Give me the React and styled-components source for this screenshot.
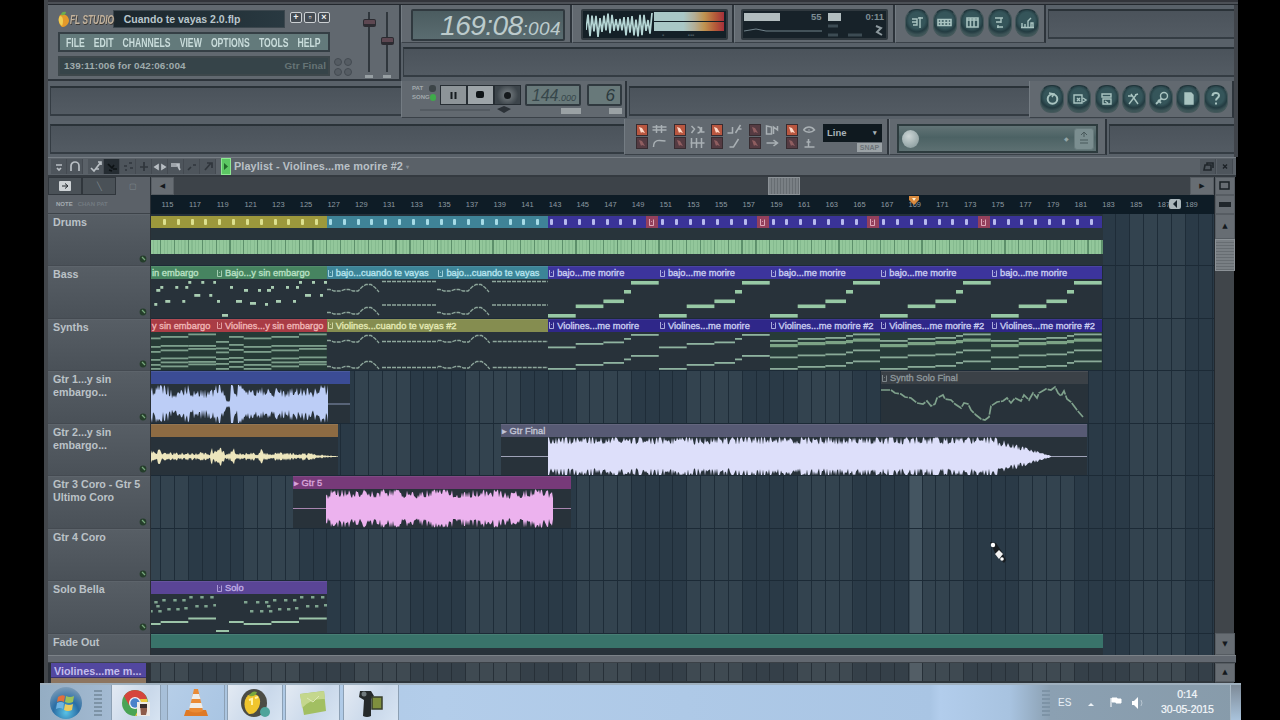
import React from "react";
import styled, { createGlobalStyle, css } from "styled-components";

const BAR = 13.84;
const PAT = BAR * 8;
const LANE = 52.45;

const Global = createGlobalStyle`
  * { box-sizing: border-box; }
  body { margin: 0; background: #000; overflow: hidden; font-family: "Liberation Sans", Arial, sans-serif; }
`;

const Screen = styled.div`
  width: 1280px; height: 720px; background: #000;
  display: flex; flex-direction: column; overflow: hidden; position: relative;
`;
const Studio = styled.div`
  margin-left: 44px; width: 1194px; height: 683px;
  display: flex; flex-direction: column;
  border-left: 4px solid #43474c;
`;

/* ---------- toolbars ---------- */
const TopStrip = styled.div`
  width: 1190px; height: 5px; flex: none;
  background: linear-gradient(#33353b 0 2px, #4c5056 2px 4px, #23282e 4px);
`;
const Toolbars = styled.div`
  height: 152px; flex: none; width: 1190px; background: #596169;
  border-right: 4px solid #40444a;
`;
const BarRow = styled.div`
  display: flex; height: ${p => p.$h}px;
`;
const Stack = styled.div`flex: 1; display: flex; flex-direction: column; min-width: 0;`;
const Slot = styled.div`
  flex: ${p => (p.$w ? "none" : 1)}; width: ${p => (p.$w ? p.$w + "px" : "auto")};
  height: 30px; margin: ${p => p.$m || "5px 0 3px 2px"};
  background: linear-gradient(#4b535b, #535b63);
  border-top: 2px solid #2a3238; border-bottom: 2px solid #343c43; border-left: 1px solid #343c43;
`;
const Panel = styled.div`
  width: ${p => p.$w}px; height: ${p => p.$h || 38}px; flex: none; background: #626970;
  border-right: 2px solid #2d343b; border-left: 1px solid #747c83; border-bottom: 1px solid #3a4148;
  padding: ${p => p.$p || "0"};
  display: flex; align-items: flex-start; gap: ${p => p.$gap || 0}px;
`;
const Main = styled.div`
  width: 353px; height: 76px; flex: none; background: #61686f;
  border-right: 2px solid #2d343b; border-bottom: 2px solid #2d343b;
  padding: 5px 0 0 10px; display: flex;
`;
const MainLeft = styled.div`width: 272px; display: flex; flex-direction: column;`;
const TitleRow = styled.div`display: flex; height: 18px; align-items: center; margin-bottom: 4px;`;
const Brand = styled.div`
  width: 55px; display: flex; align-items: center; white-space: nowrap;
  font: italic bold 13.5px "Liberation Sans", sans-serif; color: #c3b39d;
  text-shadow: 1px 1px 0 #3c3a38;
  svg { flex: none; }
  span { transform: scaleX(.62); transform-origin: left; width: 0; }
`;
const TitleBox = styled.div`
  width: 173px; height: 18px; background: linear-gradient(90deg, #1b262c, #293941);
  border: 1px solid #3c474e; color: #b9c6cc; padding-left: 10px;
  font: bold 10.5px/17px "Liberation Sans", sans-serif; white-space: nowrap;
`;
const WinButtons = styled.div`display: flex; gap: 2px; margin: -4px 0 0 5px;`;
const WinButton = styled.div`
  width: 12px; height: 11px; border: 1px solid #ccd0d3; background: #444b52; border-radius: 2px;
  color: #f1f3f4; font: bold 9px/8px "Liberation Sans", sans-serif; text-align: center;
`;
const Menu = styled.div`
  height: 20px; width: 272px; border: 2px solid #353f45; background: #637a7b; margin-bottom: 4px; overflow: hidden;
  div {
    display: flex; justify-content: space-between; width: 400px; padding: 0 8px 0 9px;
    transform: scaleX(.665); transform-origin: left;
    font: bold 13px/17px "Liberation Sans", sans-serif; color: #c9dcdb;
  }
`;
const Hint = styled.div`
  height: 20px; width: 272px; border: 2px solid #3d474b; background: #364449; padding: 0 2px 0 4px;
  display: flex; justify-content: space-between;
  font: bold 9.9px/16px "Liberation Sans", sans-serif; color: #9fabac; letter-spacing: .1px;
  span + span { color: #667476; }
`;
const Nubs = styled.div`
  display: grid; grid-template-columns: 8px 8px; gap: 2px; align-self: flex-end; margin: 0 0 3px 4px;
  i { height: 8px; border-radius: 4px; background: #555c63; border: 1px solid #444b52; }
`;
const Fader = styled.div`
  width: 18px; height: 68px; display: flex; flex-direction: column; align-items: center;
  background: linear-gradient(#30373d, #30373d) 50% 2px / 2px 60px no-repeat;
  padding-top: ${p => p.$at}px; margin-left: ${p => p.$ml || 0}px; justify-content: space-between;
  i { width: 13px; height: 8px; background: #5d4751; border: 1px solid #2c2b31; border-bottom-width: 3px; border-radius: 2px; }
  b { width: 8px; height: 3px; background: #979fa3; }
`;
const Lcd = styled.div`
  width: ${p => p.$w}px; height: ${p => p.$h || 30}px; margin-top: ${p => p.$mt || 0}px; flex: none;
  border: 2px solid ${p => p.$edge || "#30393f"}; border-radius: 2px;
  background: ${p => p.$bg || "linear-gradient(#4b5c60, #5a6c70)"};
  display: flex; overflow: hidden; color: ${p => p.$c || "#bccbcc"};
  align-items: baseline; justify-content: flex-end; white-space: nowrap;
  padding: ${p => p.$p || "0 4px"};
`;
const Digits = styled.span`
  font: italic ${p => p.$s}px/${p => p.$lh || 25}px "Liberation Sans", sans-serif;
  letter-spacing: ${p => p.$ls || 0}px;
`;
const Transport = styled.div`
  width: 27px; height: 20px; margin-top: 4px; flex: none; border: 1px solid #262d33;
  background: ${p => p.$bg}; display: flex; align-items: center; justify-content: center;
`;
const TransportCol = styled.div`display: flex; flex-direction: column; margin-left: ${p => p.$ml}px; svg { display: block; }`;
const TempoSlide = styled.svg`margin-left: -20px;`;
const Keys = styled.div`display: flex;`;
const ModeLeds = styled.div`
  width: 26px; padding: 4px 0 0 10px; display: flex; flex-direction: column; gap: 2px;
  div { display: flex; justify-content: space-between; font: bold 6px/7px "Liberation Sans", sans-serif; color: #a3aaae; width: 24px; }
  i { width: 7px; height: 7px; background: #3c4447; border-radius: 3px; }
  i.on { background: #3faa4a; }
`;
const SmallTag = styled.div`
  align-self: flex-end; height: 6px; width: ${p => p.$w}px; background: #9aa1a4; margin: 2px 0 0;
`;
const Round = styled.div`
  width: 24px; height: 28px; border-radius: 11px; flex: none;
  background: radial-gradient(circle at 50% 40%, #35555a 0 42%, #233b41 60%, #3d5457 75%);
  border: 1px solid #45585b; border-top-color: #20343a; 
  display: flex; justify-content: center; padding-top: 4px;
  svg { width: 17px; height: 17px; }
`;
const SnapGrid = styled.div`
  display: grid; grid-template-columns: repeat(5, 37.5px); grid-template-rows: 12px 12px; row-gap: 1px; width: 187px;
`;
const SnapCell = styled.div`
  display: flex; gap: 3px; align-items: center;
  i { width: 12px; height: 12px; border: 1px solid #372c31; background: ${p => (p.$on ? "#b8563f" : "#553b42")};
    display: flex; align-items: center; justify-content: center; color: ${p => (p.$on ? "#ffd9c8" : "#8f5e60")}; }
  i svg { width: 8px; height: 8px; }
  svg { width: 17px; height: 12px; }
`;
const SnapSelect = styled.div`
  width: 59px; height: 18px; background: #0f191f; color: #a8b3b8; padding: 0 5px 0 4px;
  display: flex; justify-content: space-between; font: bold 9.5px/18px "Liberation Sans", sans-serif;
  span + span { font-size: 7px; }
`;
const SnapTag = styled.div`
  width: 25px; height: 9px; margin: 1px 0 0 34px; background: #9ba2a6; color: #6c7378;
  font: bold 7px/9px "Liberation Sans", sans-serif; text-align: center;
`;
const Browser = styled.div`
  width: 201px; height: 29px; border: 2px solid #2d3b3e; background: linear-gradient(#627476, #4c6264 45%, #5d7072);
  display: flex; align-items: center; padding: 0 2px 0 3px;
  b { width: 17px; height: 18px; border-radius: 50%; background: radial-gradient(circle at 40% 35%, #ccd5d5, #7e9294); }
  span { flex: 1; text-align: right; padding-right: 5px; color: #93a5a6; font-size: 6px; }
  i { width: 20px; height: 22px; border-radius: 3px; background: #7b8e90; border: 1px solid #677a7c; display: flex; align-items: center; justify-content: center;}
`;

/* ---------- playlist ---------- */
const PlaylistBar = styled.div`
  height: 20px; width: 1188px; flex: none; background: #5a6168; border-top: 1px solid #777e85;
  border-bottom: 2px solid #343a40; display: flex; align-items: center; padding: 0 3px 0 3px;
`;
const Tool = styled.div`
  width: 16px; height: 15px; display: flex; align-items: center; justify-content: center; margin-left: ${p => p.$ml || 0}px;
  background: ${p => (p.$on ? "#252c32" : "#4e555c")}; border-right: 1px solid #444a51;
  svg { width: 14px; height: 13px; }
`;
const Green = styled.div`
  width: 10px; height: 17px; margin: 0 3px 0 5px; background: #5cc763; border: 1px solid #8ee893; display: flex; align-items: center;
`;
const PlTitle = styled.div`
  flex: 1; color: #b9c0c6; font: bold 10.9px/16px "Liberation Sans", sans-serif; white-space: nowrap; letter-spacing: .08px;
  margin-top: -1px;
  small { font-size: 6px; vertical-align: 1px; color: #878f95; }
`;
const Body = styled.div`display: flex; width: 1188px; height: 478px; flex: none;`;
const Left = styled.div`
  width: 103px; flex: none; background: #555c63; display: flex; flex-direction: column; border-right: 1px solid #292f35;
`;
const Tabs = styled.div`display: flex; height: 18px;`;
const Tab = styled.div`
  flex: 1; background: ${p => (p.$on ? "#5b6168" : "#4a5157")}; border: 1px solid ${p => (p.$on ? "#5b6168" : "#30363c")};
  display: flex; align-items: center; justify-content: center; color: #7e878d;
  font: 8px "Liberation Sans", sans-serif;
`;
const NoteTabs = styled.div`
  height: 19px; background: #5b6168; padding: 5px 0 0 8px; color: #a5adb2; border-bottom: 1px solid #3d4349;
  font: bold 6px/9px "Liberation Sans", sans-serif; display: flex; gap: 5px; span + span { color: #727a80; }
`;
const TrackHeads = styled.div`height: 441px; overflow: hidden;`;
const TrackHead = styled.div`
  height: ${LANE}px; flex: none; background: linear-gradient(#575e65, #4a5158);
  border-bottom: 1px solid #444a51; border-top: 1px solid #5d646b; padding: 1px 4px 0 5px;
  display: flex; justify-content: space-between;
  color: #bbc2c7; font: bold 10.7px/13px "Liberation Sans", sans-serif; white-space: pre;
  svg { align-self: flex-end; margin: 0 -1px 2px -6px; flex: none; }
`;
const Center = styled.div`width: 1063px; flex: none; display: flex; flex-direction: column;`;
const HScroll = styled.div`
  height: 18px; flex: none; background: #3d4349; display: flex;
`;
const Btn = styled.div`
  width: ${p => p.$w}px; height: ${p => p.$h}px; flex: none; background: #676d73; border: 1px solid #565c62;
  margin-left: ${p => p.$ml || 0}; margin-top: ${p => p.$mt || 0};
  display: flex; align-items: center; justify-content: center; color: #14191d; font: 7px/7px "DejaVu Sans", sans-serif;
`;
const Grip = styled.div`
  width: ${p => p.$w}px; height: ${p => p.$h}px; border: 1px solid #8b9196; flex: none; margin-left: ${p => p.$ml || 0}px;
  background: repeating-linear-gradient(${p => (p.$v ? "180deg" : "90deg")}, #797f84 0 2px, #676d72 2px 3px);
`;
const Ruler = styled.div`
  height: 19px; flex: none; background: #0e1c26; display: flex; padding: 5px 0 0 10.4px; overflow: hidden;
  color: #8d9aa1; font: 7.5px/10px "Liberation Sans", sans-serif; position: relative;
  div { width: ${BAR * 2}px; flex: none; }
`;
const Mark = styled.svg`position: absolute; left: 757px; top: 0;`;
const LoopEnd = styled.span`
  position: absolute; left: 1018px; top: 4px; width: 12px; height: 10px; background: #aab6bb; border-radius: 2px;
  display: flex; justify-content: center;
`;
const gridLines = css`
  background:
    repeating-linear-gradient(90deg, transparent 0 9.4px, #1e2c38 9.4px 10.4px, transparent 10.4px ${BAR}px),
    linear-gradient(90deg, #33434f 0 37.8px, #2a3a47 37.8px 93.1px, #33434f 93.1px) 0 0 / ${PAT}px 100%;
`;
const Lanes = styled.div`
  height: 441px; flex: none; overflow: hidden; position: relative; ${gridLines}
`;
const Playhead = styled.div`
  position: absolute; left: 759px; width: 12px; top: 0; bottom: 0; background: rgba(120, 140, 150, .26);
`;
const Lane = styled.div`
  height: ${LANE}px; display: flex; position: relative; border-bottom: 1px solid #1c2a36;
`;
const Clip = styled.div`
  width: ${p => p.$w}px; margin-left: ${p => p.$gap || 0}px; flex: none; overflow: hidden;
  background: ${p => p.$body || "#28323a"}; display: flex; flex-direction: column;
  svg.body { display: block; flex: none; }
`;
const ClipHead = styled.div`
  height: ${p => p.$h || 13}px; flex: none; background: ${p => p.$c}; color: ${p => p.$t || "#c9cdf0"};
  font: 9.3px/12px "Liberation Sans", sans-serif; -webkit-text-stroke: .35px; white-space: nowrap; overflow: hidden;
  padding-left: 1px; display: flex; gap: 2px; align-items: center; border-top: 1px solid rgba(255,255,255,.08);
`;
const DrumHeads = styled.div`display: flex;`;
const DrumHead = styled.div`
  width: ${p => p.$w}px; overflow: hidden;
  height: 14px; display: flex; background: ${p => p.$c}; border-top: 2px solid #24303a; flex: none;
`;
const Beat = styled.div`
  width: ${BAR}px; flex: none; display: flex; align-items: center;
  margin-left: ${p => p.$ml || 0}px;
  &::before { content: ""; width: 3px; height: 6px; background: ${p => p.$c}; margin-left: 2px; border-radius: 1px; }
`;
const RedBeat = styled.div`width: ${BAR}px; flex: none; display: flex; justify-content: center;`;
const RedBit = styled.span`
  width: 12px; height: 12px; background: #94405c; display: flex; align-items: center; justify-content: center;
`;
const DrumBand = styled.div`
  height: 14px; margin-top: 12px; flex: none;
  background:
    repeating-linear-gradient(90deg, transparent 0 9.2px, rgba(65,115,82,.6) 9.2px 10.4px, transparent 10.4px ${BAR}px),
    repeating-linear-gradient(90deg, #93c79b 0 2.3px, #85ba8f 2.3px 3.46px);
`;
const VScroll = styled.div`
  width: 20px; flex: none; background: #40454a; display: flex; flex-direction: column; border-left: 1px solid #23292f;
`;
const Splitter = styled.div`
  height: 8px; width: 1188px; flex: none; background: #626870; border-top: 1px solid #7c8288; border-bottom: 1px solid #3b4147;
`;
const Mini = styled.div`display: flex; height: 20px; width: 1188px; flex: none;`;
const MiniHead = styled.div`
  width: 103px; background: #2b3138; padding-left: 3px;
  div { width: 95px; height: 15px; background: #5247a0; color: #c3bdec; padding-left: 3px; white-space: nowrap;
    font: bold 10.8px/16px "Liberation Sans", sans-serif; border-bottom: 1px solid #383070; }
  i { display: block; width: 95px; height: 5px; background: #8d7560; }
`;
const MiniGrid = styled.div`
  width: 1063px; position: relative; border-bottom: 2px solid #243039; filter: saturate(.6) brightness(1.12); ${gridLines}
`;

/* ---------- taskbar ---------- */
const Taskbar = styled.div`
  margin-left: 40px; width: 1201px; height: 37px; flex: none; display: flex; align-items: stretch;
  background: linear-gradient(90deg, #94adc3 0, #a3bad2 70px, #aec9e5 220px, #b3cdea 400px, #a9c5e4 890px, #b2cdec 900px, #a8c3e0 970px, #8ba0b2 1010px, #879baa 100%);
  border-top: 2px solid #9fb0be;
  > * { flex-shrink: 0; }
`;
const Orb = styled.div`width: 54px; padding-left: 9px; svg { display: block; margin-top: 1px; }`;
const Dots = styled.div`
  width: 8px; margin: 5px 0 4px ${p => p.$ml || 0}px;
  background: repeating-linear-gradient(#7d93a6 0 2px, transparent 2px 4px);
`;
const Task = styled.div`
  width: ${p => p.$w}px; margin-left: ${p => p.$ml}px; display: flex; align-items: center; justify-content: center;
  border-left: 1px solid #8ca0b4; border-right: 1px solid #8ca0b4; 
  background: ${p => p.$bg || "linear-gradient(120deg, #e3eaf3, #c9d8ea 60%, #d7e4f2)"};
`;
const Tray = styled.div`
  width: 191px; display: flex; align-items: center; padding-left: 8px; color: #e8eff5; font: 10px "Liberation Sans", sans-serif;
  > svg { margin: 0 9px 0 13px; flex: none; }
`;
const Clock = styled.div`
  width: 60px; flex: none; text-align: center; color: #f4f8fb; font: 10.5px/15px "Liberation Sans", sans-serif; letter-spacing: -.1px;
  -webkit-text-stroke: .2px; margin-top: -1px;
`;
const Desk = styled.div`margin-left: auto; width: 11px; height: 35px; background: linear-gradient(#7e8b98, #a9c3dc); border-left: 1px solid #a9b9c6;`;
const Pointer = styled.svg`position: absolute; left: 988px; top: 539px;`;

/* ---------- drawings ---------- */
const rand = seed => () => ((seed = (seed * 16807) % 2147483647) / 2147483647);

function Wave({ w, from = 0, to, cy = 20, env, color, seed = 7, rough = 0.35 }) {
  const r = rand(seed * 7919);
  r(); r();
  const up = [], down = [];
  for (let x = from; x <= to; x += 1) {
    const a = env((x - from) / (to - from));
    const peak = r() < 0.3 ? 0.1 * r() : 0.3 + 0.7 * r();
    const side = () => Math.min(19, Math.max(0.6, a * (1 - rough * Math.min(1, peak + 0.3 * (r() - 0.5)))));
    up.push(`${x},${(cy - side()).toFixed(1)}`);
    down.unshift(`${x},${(cy + side()).toFixed(1)}`);
  }
  return (
    <svg className="body" width={w} height="39">
      <line x1="0" x2={w} y1={cy} y2={cy} stroke={color} strokeOpacity=".65" />
      <polygon points={[...up, ...down].join(" ")} fill={color} />
    </svg>
  );
}

const XS = [0, 27.7, 55.4, 76, 83, PAT];
const Steps = ({ rows, xs = XS, h = 2, c = "#8fb3a0" }) =>
  rows.map((ys, k) =>
    ys.map((y, i) => (
      <rect key={`${k}-${i}`} x={xs[i]} width={xs[i + 1] - xs[i]} y={y} height={h} fill={c} />
    ))
  );
const Body39 = ({ w, children }) => <svg className="body" width={w} height="39">{children}</svg>;

const NoteIcon = ({ c = "currentColor" }) => (
  <svg width="6" height="9" viewBox="0 0 6 9" fill="none" stroke={c} strokeOpacity=".8"><path d="M.5 1v6.5h4V1.5M2 3.5h.8" /></svg>
);

function PatClip({ w = PAT, gap, c, t, label, body, icon = true, dx = 0, children }) {
  return (
    <Clip $w={w} $gap={gap} $body={body}>
      <ClipHead $c={c} $t={t}>{icon && label && <NoteIcon />}<span>{label}</span></ClipHead>
      <Body39 w={w}><g transform={`translate(${dx} 0)`}>{children}</g></Body39>
    </Clip>
  );
}

const EMB = [[1, 21, 3], [6, 35, 6], [14, 7, 3], [20, 21, 6], [28, 10, 4], [34, 23, 6], [42, 10, 3], [49, 24, 3], [51, 10, 4], [55, 7, 3], [60, 21, 5], [70, 7, 3], [77, 21, 3], [80, 7, 3], [83, 2, 3], [89, 15, 6], [96, 2, 3], [104, 15, 3], [108, 2, 3]];
const Emb = () => EMB.map(([x, y, w], i) => <rect key={i} x={x} y={y} width={w} height="2.8" fill="#a9cdb2" />);
const SOLO = [[28, 7], [34, 16], [40, 7], [44, 16], [49, 7], [51, 11], [53, 16], [57, 5], [62, 14], [68, 5], [71, 14], [77, 5], [79, 13], [84, 2], [90, 11], [95, 2], [99, 11], [105, 2], [108, 10]];
const SOLOX = [0, 13, 27.7, 55.4, 83, PAT];
const Solo = () => (
  <>
    {SOLO.map(([x, y], i) => <rect key={i} x={x} y={y} width="3.400" height="2.500" fill="#7fa48f" />)}
    <Steps rows={[[36, 27, 29, 27, 23.5]]} xs={SOLOX} c="#9cc4a8" />
  </>
);
const SinEmb = () => (
  <Steps xs={SOLOX} c="#7d9f8c" h={1.8} rows={[
    [9, 4, 5.5, 4, 1.5], [15.5, 12, 14, 13, 13], [19.5, 17, 19, 17.5, 16], [26, 25, 27, 25.5, 24.5], [31, 29, 32, 29.5, 29], [36, 34, 36, 33.5, 31.5],
  ]} />
);
const Wavy = ({ y1, y2, f1, f2 }) => {
  const l = (y, f) => `M0 ${y}h3l4 1.500h6l5-1.500h4l4 1.500h5l4-4 4-2.500h5l4 3 4 4.500M55 ${f}H${PAT}`;
  return <path d={l(y1, f1) + l(y2, f2)} fill="none" stroke="#8ea79c" strokeWidth="1.300" strokeDasharray="4 1" />;
};
const Morire = () => <Steps rows={[[35, 25.5, 20.5, 11, 2]]} h={3.6} c="#97c8a4" />;
const Viol = () => <Steps rows={[[14.5, 11, 9.5, 6, 2], [36, 32, 30, 26.5, 23]]} h={1.8} />;
const Viol2 = () => (
  <>
    <Steps rows={[[8, 6, 5, 3, 1.5], [24.5, 22.5, 21.5, 19.5, 17.5], [36, 34, 33, 30, 28.5]]} h={1.8} c="#8aab98" />
    <Steps rows={[[12, 10, 9, 8, 6.5]]} h={3.2} c="#7ca486" />
  </>
);

const g = { fill: "none", stroke: "#a9c4c1", strokeWidth: 1.4 };
const topIcons = [
  <path d="M3 5h5v6H4M3 8h5M11 3v11M9 4h5" />,
  <path d="M2 5.5h13v6H2zM5 6v5M8.500 6v5M12 6v5M2 8.500h13" strokeWidth="1.600" />,
  <path d="M3 4h11v9H3zM6.500 4v9M10 4v9M3 6h11" strokeWidth="1.600" />,
  <path d="M4 4h8M10 4v5M5 8h5M6 13h6M7 11v3" />,
  <path d="M3 13V9M6 13v-3M9 13V7l3-3M12 13V9h2v4M2 13.500h13" />,
];
const botIcons = [
  <><circle cx="8.500" cy="9" r="4.800" strokeWidth="2" /><path d="M5 3l5 1-2 3" /></>,
  <path d="M3 5h8v8H3zM6 8l3 3M6 11l3-3M12 8l3 2-3 2" />,
  <path d="M4 4h9v3H4zM5 9h8v5H5zM7 11l3 2" />,
  <path d="M4 14l7-9M6 4l7 10M3 6h5M10 5l3-1" />,
  <><circle cx="11" cy="6" r="3.500" /><path d="M8.500 8.500L3 14M5 10l3 3" strokeWidth="1.800" /></>,
  <path d="M5 3h6l2 2v9H5z" fill="#a9c4c1" />,
  <path d="M5.500 6c0-4 6.500-4 6.500-.500 0 2.500-3 2.500-3 5M9 12.500V14.500" strokeWidth="2" />,
];
const RoundIcon = ({ children }) => <Round><svg viewBox="0 0 17 17" {...g}>{children}</svg></Round>;

const snapIcons = [
  [1, "M1 3h14M1 6h14M5 1v8M10 1v8"], [1, "M2 2l3 3-3 4M8 3a3 3 0 010 6M12 3v5h3"], [1, "M1 9h5V3M9 9l5-8M12 5h3"],
  [0, "M2 2v8h5V3zM9 10V3l4 3V2"], [1, "M2 6c3-4 8-4 11 0c-3 3-8 3-11 0M7 6h1"],
  [0, "M2 10c0-8 6-7 12-6"], [0, "M2 1v10M7 1v10M12 1v10M1 6h14"], [0, "M3 10h4l5-8"], [0, "M2 6h10M9 3l4 3-4 3"], [0, "M3 10h10M7 2v8M5 5h4"],
];
const toolIcons = [
  "M4 5h6M5 8l2 2 2-2", "M3 11V6a4 4 0 018 0v5", "M2 8l3 3L12 2M9 2h3v3M7 9h3", "M3 4l4 4 2-3M8 9h4M4 10l3 1", "M3 6h3M8 3h3M4 10h2M9 8h3",
  "M7 2v9M3 7h8", "M2 7l3-2v4zM12 7L9 5v4z", "M2 4h8v5M8 4l3 6M2 6h6", "M3 10l3-3M8 5h3", "M4 10l6-7M6 3h5v5",
];

const Oscilloscope = () => {
  let d = "";
  const r = rand(21);
  for (let x = 0; x < 68; x += 2) d += `${x ? "L" : "M"}${x.toFixed(1)} ${(14 + ((x / 2) % 2 ? -1 : 1) * (5 + r() * 7)).toFixed(1)}`;
  return <svg width="68" height="26"><path d={d} fill="none" stroke="#b5d6d5" strokeWidth="1.700" /></svg>;
};
const Meters = styled.div`
  width: 70px; align-self: flex-start; margin-top: 1px; display: flex; flex-direction: column; gap: 1px;
  div { height: 9px; background: linear-gradient(90deg, #a9c7c6 0 42%, #b3ae96 58%, #bf9350 72%, #b55c39 87%, #a5303b); }
  span { color: #4a5a62; font: 6px/7px "Liberation Sans", sans-serif; padding-left: 8px; word-spacing: 22px; }
`;
const Load = styled.div`
  flex: 1; align-self: flex-start; padding-top: 1px;
  > div { display: flex; align-items: center; height: 10px; color: #7e8d94; font: bold 9.5px/10px "Liberation Sans", sans-serif; gap: 6px; }
`;
const LoadBar = styled.i`display: block; height: 8px; width: ${p => p.$w}px; background: #b2bdbf;`;
const LoadText = styled.span`margin-left: ${p => p.$ml};`;

const drumTypes = [
  { w: 175.9, c: "#9c983c", b: "#dde08e", n: 12, dx: 9.9 },
  { w: BAR * 16, c: "#3f8397", b: "#a6dbe6", n: 16, dx: 0 },
];

const heads = [
  "Drums", "Bass", "Synths", "Gtr 1...y sin\nembargo...", "Gtr 2...y sin\nembargo...",
  "Gtr 3 Coro - Gtr 5\nUltimo Coro", "Gtr 4 Coro", "Solo Bella", "Fade Out",
];
const GreenLed = () => (
  <svg width="8" height="8" viewBox="0 0 8 8"><circle cx="4" cy="4" r="3.400" fill="#253e2b" /><path d="M3 2l3 3" stroke="#76a77b" strokeWidth="1.200" /></svg>
);

const I = "#3c349c", V = "#2f2789", T = "#3c8497", GR = "#468460", R = "#a93c45", OL = "#858d50";

const near = (t, c, d) => Math.abs(t - c) < d;
const r1 = t => {
  if (near(t, 0.435, 0.012)) return 4;
  const base = near(t, 0.05, 0.05) ? 18 : near(t, 0.66, 0.06) || t > 0.78 ? 16 : 14;
  return base + (near(t, 0.385, 0.02) || near(t, 0.46, 0.02) || near(t, 0.51, 0.02) ? 8 : 0) + (near(t, 0.21, 0.02) || t > 0.96 ? 5 : 0);
};
const r2 = t => (t > 0.8 ? 4 * (1 - t) / 0.2 + 0.5 : 4) + (near(t, 0.36, 0.04) || near(t, 0.44, 0.012) ? 4.5 : 0) + (near(t, 0.03, 0.04) || near(t, 0.6, 0.01) ? 3 : 0);
const r5 = t => Math.min(1, t * 12 + 0.75) * (18.5 + 1.5 * Math.sin(t * 29) + (near(t, 0.17, 0.01) ? 5 : 0));
const rf = t => (t < 0.88 ? 20.5 : Math.max(0.6, 20.5 * (1 - (t - 0.88) / 0.125)));

export default function App() {
  return (
    <Screen>
      <Global />
      <Studio>
        <TopStrip />
        <Toolbars>
          <BarRow $h={76}>
            <Main>
              <MainLeft>
                <TitleRow>
                  <Brand>
                    <svg width="12" height="17" viewBox="0 0 12 17">
                      <path d="M2 4c4-2 9 1 9 6-1 4-4 6-7 6C0 13 0 7 2 4z" fill="#e39a2b" />
                      <path d="M2 5c3 0 4 5 2 10C0 12 0 7 2 5z" fill="#f0cf52" />
                      <path d="M3 4c0-3 3-4 5-3 0 2-2 4-5 3z" fill="#6fae4a" />
                    </svg>
                    <div><span style={{ display: "inline-block" }}>FL STUDIO</span></div>
                  </Brand>
                  <TitleBox>Cuando te vayas 2.0.flp</TitleBox>
                  <WinButtons><WinButton>+</WinButton><WinButton>▫</WinButton><WinButton>×</WinButton></WinButtons>
                </TitleRow>
                <Menu><div>{["FILE", "EDIT", "CHANNELS", "VIEW", "OPTIONS", "TOOLS", "HELP"].map(m => <span key={m}>{m}</span>)}</div></Menu>
                <Hint><span>139:11:006 for 042:06:004</span><span>Gtr Final</span></Hint>
              </MainLeft>
              <Nubs><i /><i /><i /><i /></Nubs>
              <Fader $at={9} $ml={8}><i /><b /></Fader>
              <Fader $at={27}><i /><b /></Fader>
            </Main>
            <Stack>
              <BarRow $h={38}>
                <Panel $w={171} $p="4px 0 0 9px">
                  <Lcd $w={154} $h={32} $p="0 2px"><Digits $s={28} $lh={29} $ls={-0.6}>169:08</Digits><Digits $s={19} $ls={0.4}>:004</Digits></Lcd>
                </Panel>
                <Panel $w={162} $p="4px 0 0 8px">
                  <Lcd $w={147} $h={31} $bg="#142027" $p="0 2px"><Oscilloscope /><Meters><div /><div /><span>▪ ▪▪▪</span></Meters></Lcd>
                </Panel>
                <Panel $w={161} $p="4px 0 0 6px">
                  <Lcd $w={147} $h={31} $bg="#172229" $p="0 2px">
                    <Load>
                      <div><LoadBar $w={36} /><LoadText $ml="25px">55</LoadText><LoadBar $w={13} /><LoadText $ml="auto">0:11</LoadText></div>
                      <svg width="140" height="16"><path d="M0 9l12-2 10 2h56" stroke="#71828a" fill="none" /><path d="M84 4h10M84 13h10M104 13h14" stroke="#3c4b53" strokeWidth="3" /><path d="M132 4l5 2-4 4 5 3" stroke="#8d999e" fill="none" strokeWidth="2" /></svg>
                    </Load>
                  </Lcd>
                </Panel>
                <Panel $w={151} $p="4px 0 0 9px" $gap={3.5}>{topIcons.map((x, i) => <RoundIcon key={i}>{x}</RoundIcon>)}</Panel>
                <Slot $m="4px 0 0 2px" />
              </BarRow>
              <BarRow $h={38}><Slot $m="4px 0 0 2px" /></BarRow>
            </Stack>
          </BarRow>
          <BarRow $h={38}>
            <Slot $w={351} />
            <Panel $w={226} $h={37}>
              <ModeLeds><div>PAT<i /></div><div>SONG<i className="on" /></div></ModeLeds>
              <TransportCol $ml={12}>
                <Keys>
                  <Transport $bg="#8d9498"><svg width="8" height="7"><path d="M1.500 0v7M5.500 0v7" stroke="#171c20" strokeWidth="2" /></svg></Transport>
                  <Transport $bg="#9da4a8"><svg width="9" height="8"><rect width="8" height="7" rx="2" fill="#0f1417" /></svg></Transport>
                  <Transport $bg="radial-gradient(circle, #7c8387, #3c444a 70%)"><svg width="9" height="9"><circle cx="4.500" cy="4.500" r="3.500" fill="#15191c" /></svg></Transport>
                </Keys>
                <TempoSlide width="92" height="10"><path d="M0 5h70" stroke="#474e54" /><path d="M77 4l7-3 7 3-7 4z" fill="#2b3137" /></TempoSlide>
              </TransportCol>
              <TransportCol $ml={4}>
                <Lcd $w={56} $h={22} $mt={3} $bg="#68797a" $c="#37474b" $p="0 3px"><Digits $s={16} $lh={19}>144</Digits><Digits $s={9} $lh={18}>.000</Digits></Lcd>
                <SmallTag $w={20} />
              </TransportCol>
              <TransportCol $ml={6}>
                <Lcd $w={35} $h={22} $mt={3} $bg="#68797a" $c="#2c3a3e" $p="0 5px"><Digits $s={17} $lh={19}>6</Digits></Lcd>
                <SmallTag $w={13} />
              </TransportCol>
            </Panel>
            <Slot />
            <Panel $w={205} $h={37} $p="4px 0 0 10px" $gap={3.3}>{botIcons.map((x, i) => <RoundIcon key={i}>{x}</RoundIcon>)}</Panel>
          </BarRow>
          <BarRow $h={38}>
            <Slot $w={574} />
            <Panel $w={265} $h={36} $p="5px 0 0 11px">
              <SnapGrid>
                {snapIcons.map(([on, d], i) => (
                  <SnapCell key={i} $on={on}>
                    <i><svg viewBox="0 0 8 8"><path d="M1 1l3 1 3 5-3-1-1 1z" fill="currentColor" /></svg></i>
                    <svg viewBox="0 0 16 12" fill="none" stroke="#a9b0b4" strokeWidth="1.500"><path d={d} /></svg>
                  </SnapCell>
                ))}
              </SnapGrid>
              <div><SnapSelect><span>Line</span><span>▾</span></SnapSelect><SnapTag>SNAP</SnapTag></div>
            </Panel>
            <Panel $w={218} $h={36} $p="5px 0 0 7px">
              <Browser><b /><span>◆</span><i><svg width="10" height="14"><path d="M5 0v5M1 8h8M1 11h8M2 3l3-3 3 3" stroke="#49595b" fill="none" /></svg></i></Browser>
            </Panel>
            <Slot />
          </BarRow>
        </Toolbars>

        <PlaylistBar>
          {toolIcons.map((d, i) => (
            <Tool key={i} $on={i === 3} $ml={i === 2 ? 5 : 0}>
              <svg viewBox="0 0 14 13" fill="none" stroke={i === 3 ? "#0d1215" : i > 3 && i !== 6 && i !== 7 ? "#30363c" : "#b9bfc4"} strokeWidth="1.700"><path d={d} /></svg>
            </Tool>
          ))}
          <Green><svg width="8" height="9"><path d="M2 1l4 3.500L2 8z" fill="#226a2b" /></svg></Green>
          <PlTitle>Playlist - Violines...me morire #2 <small>▾</small></PlTitle>
          <Tool><svg viewBox="0 0 14 13" fill="none" stroke="#20262b" strokeWidth="1.600"><path d="M4 5h6v5H3zM6 5V3h6v5" /></svg></Tool>
          <Tool $ml={1}><svg viewBox="0 0 14 13" fill="none" stroke="#1c2227" strokeWidth="1.400"><path d="M5 4.500l4 4M9 4.500l-4 4" /></svg></Tool>
        </PlaylistBar>

        <Body>
          <Left>
            <Tabs>
              <Tab><svg width="12" height="10"><rect width="12" height="10" rx="1" fill="#ced3d6" /><path d="M3 5h5M6 2.500L9 5 6 7.500" stroke="#20262b" fill="none" /></svg></Tab>
              <Tab>╲</Tab><Tab $on>▢</Tab>
            </Tabs>
            <NoteTabs><span>NOTE</span><span>CHAN PAT</span></NoteTabs>
            <TrackHeads>
              {heads.map(n => <TrackHead key={n}><span>{n}</span><GreenLed /></TrackHead>)}
            </TrackHeads>
          </Left>
          <Center>
            <HScroll><Btn $w={23} $h={18}>◀</Btn><Grip $w={32} $h={18} $ml={594} /><Btn $w={24} $h={18} $ml="auto">▶</Btn></HScroll>
            <Ruler>
              {Array.from({ length: 38 }, (_, i) => <div key={i}>{115 + i * 2}</div>)}
              <Mark width="12" height="12"><path d="M1 1h10v4L6 10 1 5z" fill="#d98a3e" /><path d="M4 3h4L6 6z" fill="#fff0d0" /></Mark>
              <LoopEnd><svg width="8" height="10"><path d="M6 1L2 5l4 4z" fill="#14212a" /></svg></LoopEnd>
            </Ruler>
            <Lanes>
              <Playhead />
              <Lane>
                <Clip $w={951.5} $body="#28343b">
                  <DrumHeads>
                    {drumTypes.map(d => (
                      <DrumHead key={d.c} $c={d.c} $w={d.w}>
                        {Array.from({ length: d.n }, (_, i) => <Beat key={i} $c={d.b} $ml={i === 0 ? d.dx : 0} />)}
                      </DrumHead>
                    ))}
                    <DrumHead $c="#3a3398" $w={BAR * 40}>
                      {Array.from({ length: 40 }, (_, i) =>
                        i % 8 === 7 && i < 32
                          ? <RedBeat key={i}><RedBit><NoteIcon c="#f0c0d0" /></RedBit></RedBeat>
                          : <Beat key={i} $c="#b7b9ee" />
                      )}
                    </DrumHead>
                  </DrumHeads>
                  <DrumBand />
                </Clip>
              </Lane>
              <Lane>
                <PatClip w={65} dx={65 - PAT} c={GR} t="#b9e0c4" label="in embargo" icon={false}><Emb /></PatClip>
                <PatClip c={GR} t="#b9e0c4" label="Bajo...y sin embargo"><Emb /></PatClip>
                {[0, 1].map(i => <PatClip key={i} c={T} t="#b5e3ee" label="bajo...cuando te vayas"><Wavy y1={10.5} y2={33.5} f1={2.5} f2={26} /></PatClip>)}
                {[0, 1, 2, 3, 4].map(i => <PatClip key={i} c={I} label="bajo...me morire"><Morire /></PatClip>)}
              </Lane>
              <Lane>
                <PatClip w={65} dx={65 - PAT} c={R} t="#f0b6b6" label="y sin embargo" icon={false} body="#263a36"><SinEmb /></PatClip>
                <PatClip c={R} t="#f0b6b6" label="Violines...y sin embargo" body="#263a36"><SinEmb /></PatClip>
                <PatClip w={PAT * 2} c={OL} t="#e4e9b5" label="Violines...cuando te vayas #2">
                  {[0, PAT].map(x => <g key={x} transform={`translate(${x} 0)`}><Wavy y1={8.5} y2={34.5} f1={9.5} f2={35.5} /></g>)}
                </PatClip>
                {[0, 1].map(i => <PatClip key={i} c={V} label="Violines...me morire"><Viol /></PatClip>)}
                {[0, 1, 2].map(i => <PatClip key={i} c={V} label="Violines...me morire #2" body="#273b39"><Viol2 /></PatClip>)}
              </Lane>
              <Lane>
                <Clip $w={199} ><ClipHead $c="#3b4c95" /><Wave w={199} to={177} env={r1} color="#bccdf6" seed={11} rough={0.6} /></Clip>
                <PatClip gap={531} w={207} c="#3b4147" t="#8e979b" label="Synth Solo Final">
                  <polyline fill="none" stroke="#7fa18c" strokeWidth="1.700" strokeDasharray="9 1" points="0,6 10,6 14,9 20,10 24,13 30,14 36,19 42,20 46,17 50,22 54,20 56,14 62,11 64,15 70,16 74,20 80,24 83,19 87,20 90,26 95,31 100,35 104,36 108,33 110,22 116,18 122,17 126,14 130,19 134,14 140,17 143,11 148,16 152,9 156,14 158,9 165,5 170,6 174,3 177,9 180,12 183,7 186,15 190,18 196,26 202,33" />
                </PatClip>
              </Lane>
              <Lane>
                <Clip $w={187}><ClipHead $c="#8d6b43" /><Wave w={187} to={185} env={r2} cy={19.5} color="#ede6bd" seed={5} rough={0.7} /></Clip>
                <Clip $w={586} $gap={163}>
                  <ClipHead $c="#575a74" $t="#c3c6d6"><span>▸ Gtr Final</span></ClipHead>
                  <Wave w={586} from={47} to={550} env={rf} cy={19.5} color="#dddffa" seed={33} rough={0.42} />
                </Clip>
              </Lane>
              <Lane>
                <Clip $w={278} $gap={142}>
                  <ClipHead $c="#773a79" $t="#d9a6da"><span>▸ Gtr 5</span></ClipHead>
                  <Wave w={278} from={33} to={260} env={r5} cy={19.5} color="#ecb2ee" seed={77} rough={0.42} />
                </Clip>
              </Lane>
              <Lane />
              <Lane>
                <PatClip w={65} dx={65 - PAT} c="#5a4596"><Solo /></PatClip>
                <PatClip c="#5a4596" t="#c1afe6" label="Solo"><Solo /></PatClip>
              </Lane>
              <Lane><Clip $w={951.5}><ClipHead $c="#39736a" $h={14} /></Clip></Lane>
            </Lanes>
          </Center>
          <VScroll>
            <Btn $w={20} $h={18}><svg width="12" height="10"><rect x="1" y="1" width="9" height="7" fill="none" stroke="#191f24" strokeWidth="1.500" /></svg></Btn>
            <Btn $w={20} $h={19}><svg width="12" height="5"><rect width="12" height="5" fill="#20262b" /></svg></Btn>
            <Btn $w={20} $h={25}>▲</Btn>
            <Grip $w={20} $h={32} $v />
            <Btn $w={20} $h={22} $mt="auto">▼</Btn>
          </VScroll>
        </Body>
        <Splitter />
        <Mini>
          <MiniHead><div>Violines...me m...</div><i /></MiniHead>
          <MiniGrid><Playhead /></MiniGrid>
          <VScroll><Btn $w={20} $h={19}>▲</Btn></VScroll>
        </Mini>
      </Studio>

      <Taskbar>
        <Orb>
          <svg width="34" height="33" viewBox="0 0 34 33">
            <defs><radialGradient id="orb" cx=".5" cy=".8" r=".8"><stop offset="0" stopColor="#59c2e6" /><stop offset=".5" stopColor="#2a6ea5" /><stop offset="1" stopColor="#7f9db8" /></radialGradient></defs>
            <circle cx="17" cy="17" r="16" fill="url(#orb)" />
            <path d="M9 11q4-3 7-1l-1 6q-3-2-7 0z" fill="#e0703c" /><path d="M17 10q4 2 8 0l-1 6q-4 2-8 0z" fill="#9cc25a" />
            <path d="M8 17q4-2 7 0l-1 6q-3-2-7 0z" fill="#6fb4e2" /><path d="M16 18q4 2 8 0l-1 6q-4 2-8 0z" fill="#eccb5c" />
          </svg>
        </Orb>
        <Dots />
        <Task $w={50} $ml={9}>
          <svg width="30" height="28" viewBox="0 0 30 28">
            <circle cx="14" cy="14" r="13" fill="#4aa455" /><path d="M3 7a13 13 0 0122 0l1 4H14L8 16z" fill="#d5453c" /><path d="M26 10a13 13 0 01-12 17l6-11-1-6z" fill="#edc83f" />
            <circle cx="14" cy="14" r="6" fill="#f1f4f7" /><circle cx="14" cy="14" r="4.700" fill="#4a82ca" />
            <rect x="16" y="13" width="13" height="14" fill="#eee9e5" /><path d="M19 16h7v6l-1 4h-5z" fill="#8e5b4a" /><path d="M19 15h7v4h-7z" fill="#3a2c2c" />
          </svg>
        </Task>
        <Task $w={58} $ml={6} $bg="linear-gradient(120deg, #b6cee8, #a9c5e3)">
          <svg width="26" height="29" viewBox="0 0 26 29">
            <path d="M3 22h20l2 6H1z" fill="#df7a26" /><path d="M11 1h4l5 22q-7 3-14 0z" fill="#ea8b35" />
            <path d="M10 6h6l1.500 5h-9zM7.500 15h11l1.300 5H6.300z" fill="#efeeea" />
          </svg>
        </Task>
        <Task $w={56} $ml={2}>
          <svg width="30" height="30" viewBox="0 0 30 30">
            <ellipse cx="14" cy="15" rx="13" ry="14" fill="#4b4c45" /><path d="M5 12q4-9 12-5 5 4 2 12-4 8-10 7-6-5-4-14z" fill="#f0c52d" />
            <path d="M9 8q3-6 8-4-1 5-8 4z" fill="#79a83d" /><path d="M9 12l3-1v6M15 10l3-1" stroke="#fff2a5" strokeWidth="2" fill="none" /><circle cx="25" cy="24" r="5" fill="#4ea49b" />
          </svg>
        </Task>
        <Task $w={55} $ml={2}>
          <svg width="28" height="26" viewBox="0 0 28 26"><path d="M1 4l24-3 2 20-22 4z" fill="#a2bf62" /><path d="M1 4l24-3 1 8Q12 8 3 18z" fill="#c4d78d" /><path d="M8 8l6 4 6-6" stroke="#dfe9b8" fill="none" /></svg>
        </Task>
        <Task $w={56} $ml={3}>
          <svg width="28" height="30" viewBox="0 0 28 30"><path d="M3 3h11l3 5-3 3v17q-4 2-8 0L7 12 2 9z" fill="#262a2b" /><rect x="15" y="9" width="10" height="12" fill="#7f8f3e" stroke="#393f2c" strokeWidth="1.500" /><circle cx="7" cy="6" r="2.500" fill="#717a7d" /></svg>
        </Task>
        <Dots $ml={643} />
        <Tray>
          <span>ES</span>
          <svg width="64" height="16" viewBox="0 0 64 16">
            <path d="M4 11l3-3 3 3z" fill="#edf3f7" /><path d="M27 12V3M28 3h5v1h4v4h-5V7h-4z" fill="#fff" stroke="#fff" /><path d="M48 6h2l4-4v12l-4-4h-2z" fill="#fff" /><path d="M57 5q2 3 0 6" stroke="#b8c6d1" fill="none" />
          </svg>
          <Clock>0:14<br />30-05-2015</Clock>
          <Desk />
        </Tray>
      </Taskbar>
      <Pointer width="24" height="28" viewBox="0 0 24 28">
        <path d="M2 3l6 1 6 9 4 8-2 3-8-8z" fill="#111" opacity=".7" />
        <circle cx="5" cy="6" r="2.200" fill="#fff" /><path d="M7 15l4-4 4 4-4 5z" fill="#f3f3f3" /><circle cx="14" cy="20" r="1.800" fill="#fff" />
      </Pointer>
    </Screen>
  );
}
